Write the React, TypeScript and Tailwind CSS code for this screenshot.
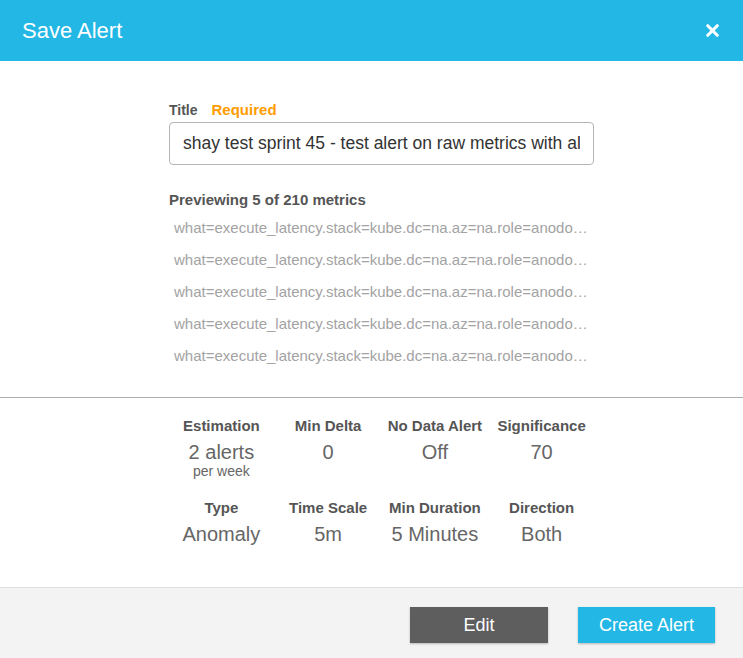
import { X } from 'lucide-react';

const metrics = Array.from({ length: 5 }, () =>
  'what=execute_latency.stack=kube.dc=na.az=na.role=anodot-worker.host=node-17.pod=execute-latency-7c9f'
);

const stats = [
  { label: 'Estimation', value: '2 alerts', sub: 'per week' },
  { label: 'Min Delta', value: '0' },
  { label: 'No Data Alert', value: 'Off' },
  { label: 'Significance', value: '70' },
  { label: 'Type', value: 'Anomaly' },
  { label: 'Time Scale', value: '5m' },
  { label: 'Min Duration', value: '5 Minutes' },
  { label: 'Direction', value: 'Both' },
];

export default function App() {
  return (
    <div className="w-[743px] h-[658px] bg-white flex flex-col font-['Liberation_Sans',Arial,sans-serif] overflow-hidden">
      <div className="h-[61px] shrink-0 bg-[#23b7e5] flex items-center justify-between pl-[22px] pr-[21px]">
        <h1 className="text-[22px] text-white leading-none">Save Alert</h1>
        <X className="w-[19px] h-[19px] text-white" strokeWidth={4} />
      </div>

      <div className="pt-[40px] pb-[25px] border-b border-[#acacac]">
        <div className="ml-[169px] w-[425px]">
          <div className="flex items-baseline gap-[14px] leading-[18px]">
            <span className="text-[14px] font-bold text-[#555]">Title</span>
            <span className="text-[15px] font-bold text-[#ff9c00]">Required</span>
          </div>
          <input
            type="text"
            readOnly
            value="shay test sprint 45 - test alert on raw metrics with all dimensions"
            className="mt-[3px] w-full h-[43px] px-[13px] border border-[#b5b5b5] rounded-[4px] text-[17.5px] text-[#333] bg-white outline-none"
          />
          <div className="mt-[26px] text-[15px] font-bold text-[#555] leading-[18px]">
            Previewing 5 of 210 metrics
          </div>
          <div className="mt-[3px] pl-[5px] pr-[6px]">
            {metrics.map((m, i) => (
              <div key={i} className="text-[15px] leading-[32px] text-[#a3a3a3] truncate">
                {m}
              </div>
            ))}
          </div>
        </div>
      </div>

      <div className="flex-1 pt-[19px]">
        <div className="ml-[168px] w-[427px] grid grid-cols-4 gap-y-[21px] text-center">
          {stats.map((s) => (
            <div key={s.label} className="flex flex-col items-center">
              <div className="text-[15px] font-bold text-[#555] leading-[18px] whitespace-nowrap">{s.label}</div>
              <div className="mt-[5px] text-[20px] text-[#666] leading-[24px] whitespace-nowrap">{s.value}</div>
              {s.sub && <div className="text-[14px] text-[#666] leading-[14px]">{s.sub}</div>}
            </div>
          ))}
        </div>
      </div>

      <div className="h-[71px] shrink-0 bg-[#f3f3f3] border-t border-[#dedede] flex justify-end items-start pt-[19px] pr-[28px] gap-[30px]">
        <button className="w-[138px] h-[36px] bg-[#5e5e5e] text-white text-[18px] shadow-[0_1px_2px_rgba(0,0,0,0.25)]">
          Edit
        </button>
        <button className="w-[137px] h-[36px] bg-[#23b7e5] text-white text-[18px] shadow-[0_1px_2px_rgba(0,0,0,0.25)]">
          Create Alert
        </button>
      </div>
    </div>
  );
}
